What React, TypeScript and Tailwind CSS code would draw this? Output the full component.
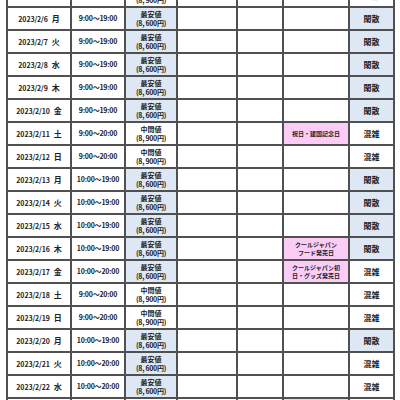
import clsx from 'clsx'

type Row = {
  date: string
  wd: string
  time: string
  price: 'low' | 'mid'
  event?: string
  crowd: '閑散' | '混雑'
}

const rows: Row[] = [
  { date: '2023/2/5', wd: '日', time: '9:00～20:00', price: 'mid', crowd: '混雑' },
  { date: '2023/2/6', wd: '月', time: '9:00～19:00', price: 'low', crowd: '閑散' },
  { date: '2023/2/7', wd: '火', time: '9:00～19:00', price: 'low', crowd: '閑散' },
  { date: '2023/2/8', wd: '水', time: '9:00～19:00', price: 'low', crowd: '閑散' },
  { date: '2023/2/9', wd: '木', time: '9:00～19:00', price: 'low', crowd: '閑散' },
  { date: '2023/2/10', wd: '金', time: '9:00～19:00', price: 'low', crowd: '閑散' },
  { date: '2023/2/11', wd: '土', time: '9:00～20:00', price: 'mid', event: '祝日・建国記念日', crowd: '混雑' },
  { date: '2023/2/12', wd: '日', time: '9:00～20:00', price: 'mid', crowd: '混雑' },
  { date: '2023/2/13', wd: '月', time: '10:00～19:00', price: 'low', crowd: '閑散' },
  { date: '2023/2/14', wd: '火', time: '10:00～19:00', price: 'low', crowd: '閑散' },
  { date: '2023/2/15', wd: '水', time: '10:00～19:00', price: 'low', crowd: '閑散' },
  { date: '2023/2/16', wd: '木', time: '10:00～19:00', price: 'low', event: 'クールジャパン\nフード発売日', crowd: '閑散' },
  { date: '2023/2/17', wd: '金', time: '10:00～20:00', price: 'low', event: 'クールジャパン初\n日・グッズ発売日', crowd: '混雑' },
  { date: '2023/2/18', wd: '土', time: '9:00～20:00', price: 'mid', crowd: '混雑' },
  { date: '2023/2/19', wd: '日', time: '9:00～20:00', price: 'mid', crowd: '混雑' },
  { date: '2023/2/20', wd: '月', time: '10:00～19:00', price: 'low', crowd: '閑散' },
  { date: '2023/2/21', wd: '火', time: '10:00～20:00', price: 'low', crowd: '混雑' },
  { date: '2023/2/22', wd: '水', time: '10:00～20:00', price: 'low', crowd: '混雑' },
  { date: '2023/2/23', wd: '木', time: '9:00～20:00', price: 'mid', event: '祝日・天皇誕生日', crowd: '混雑' },
]

const cell = 'border-2 border-[#505050] h-[23px] p-0 text-center align-middle overflow-hidden'

export default function App() {
  return (
    <div className="h-[400px] w-[400px] overflow-hidden bg-white font-['Noto_Sans_CJK_JP',sans-serif] font-bold text-[#222]">
      <table className="ml-[6px] mt-[-17px] table-fixed border-collapse">
        <colgroup>
          <col className="w-[64px]" />
          <col className="w-[54px]" />
          <col className="w-[52px]" />
          <col className="w-[60px]" />
          <col className="w-[46px]" />
          <col className="w-[66px]" />
          <col className="w-[45px]" />
        </colgroup>
        <tbody>
          {rows.map(r => (
            <tr key={r.date}>
              <td className={clsx(cell, 'text-[7px] leading-none whitespace-nowrap tracking-[-0.1px]')}>
                {r.date}
                <span className="ml-[4px] text-[8px]">{r.wd}</span>
              </td>
              <td className={clsx(cell, 'text-[7px] leading-none whitespace-nowrap tracking-[-0.2px]')}>{r.time}</td>
              <td className={clsx(cell, 'text-[7px] leading-[9px]', r.price === 'low' && 'bg-[#dde8f4]')}>
                <div>{r.price === 'low' ? '最安値' : '中間値'}</div>
                <div className="tracking-[-0.3px]">{r.price === 'low' ? '(8, 600円)' : '(8, 900円)'}</div>
              </td>
              <td className={cell} />
              <td className={cell} />
              <td
                className={clsx(
                  cell,
                  'whitespace-pre-line text-[6px] leading-[8px]',
                  r.event && 'bg-[#fbcdf6]'
                )}
              >
                {r.event}
              </td>
              <td className={clsx(cell, 'text-[8px] leading-none', r.crowd === '閑散' && 'bg-[#dde8f4]')}>
                {r.crowd}
              </td>
            </tr>
          ))}
        </tbody>
      </table>
    </div>
  )
}
